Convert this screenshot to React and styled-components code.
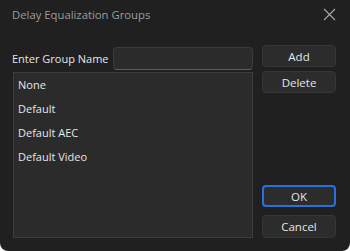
import React from "react";
import styled, { createGlobalStyle } from "styled-components";

const GlobalStyle = createGlobalStyle`
  html, body {
    margin: 0;
    padding: 0;
    background: #ffffff;
  }
  * {
    box-sizing: border-box;
  }
`;

const Dialog = styled.div`
  width: 350px;
  height: 251px;
  background: #202020;
  border-radius: 0 0 8px 8px;
  font-family: "Open Sans", "Noto Sans", sans-serif;
  font-size: 11px;
  color: #e6e6e6;
  display: flex;
  flex-direction: column;
  overflow: hidden;
`;

const TitleBar = styled.div`
  height: 30px;
  display: flex;
  align-items: center;
  justify-content: space-between;
  padding: 0 14px 2px 12px;
`;

const Title = styled.div`
  color: #9c9c9c;
  font-size: 11.3px;
`;

const Close = styled.button`
  width: 14px;
  height: 14px;
  padding: 0;
  border: none;
  background: none;
  display: flex;
  align-items: center;
  justify-content: center;
`;

const Body = styled.div`
  flex: 1;
  display: flex;
  gap: 9px;
  padding: 15px 14px 13px 12px;
`;

const Left = styled.div`
  width: 241px;
  display: flex;
  flex-direction: column;
  gap: 2px;
`;

const NameRow = styled.div`
  display: flex;
  align-items: center;
  height: 25px;
  padding-top: 1px;
`;

const Label = styled.label`
  width: 101px;
  flex: none;
  white-space: nowrap;
`;

const Input = styled.input`
  flex: 1;
  min-width: 0;
  width: 0;
  height: 23px;
  background: #2b2b2b;
  border: 1px solid #3a3a3a;
  border-bottom-color: #5a5a5a;
  border-radius: 4px;
  color: #e6e6e6;
  font: inherit;
  outline: none;
  padding: 0 6px;
`;

const List = styled.ul`
  list-style: none;
  margin: 0 0 0 1px;
  padding: 0;
  flex: 1;
  background: #2b2b2b;
  border: 1px solid #3d3d3d;
`;

const Item = styled.li`
  height: 24px;
  line-height: 24px;
  padding-left: 4px;
`;

const Right = styled.div`
  width: 74px;
  display: flex;
  flex-direction: column;
  gap: 4px;
`;

const Spacer = styled.div`
  flex: 1;
`;

const Button = styled.button`
  height: ${({ $tall }) => ($tall ? "23px" : "22px")};
  width: 74px;
  background: #2c2c2c;
  border: ${({ $primary }) => ($primary ? "2px solid #2a6fe0" : "1px solid #363636")};
  border-radius: 4px;
  color: #e6e6e6;
  font: inherit;
  font-size: 11.5px;
  padding: 0;
  margin-top: ${({ $gap }) => ($gap ? `${$gap}px` : "0")};
`;

const items = ["None", "Default", "Default AEC", "Default Video"];

export default function App() {
  return (
    <>
      <GlobalStyle />
      <Dialog>
        <TitleBar>
          <Title>Delay Equalization Groups</Title>
          <Close aria-label="Close">
            <svg width="13" height="13" viewBox="0 0 13 13">
              <path d="M1 1 L12 12 M12 1 L1 12" stroke="#a8a8a8" strokeWidth="1.1" />
            </svg>
          </Close>
        </TitleBar>
        <Body>
          <Left>
            <NameRow>
              <Label>Enter Group Name</Label>
              <Input />
            </NameRow>
            <List>
              {items.map((it) => (
                <Item key={it}>{it}</Item>
              ))}
            </List>
          </Left>
          <Right>
            <Button>Add</Button>
            <Button>Delete</Button>
            <Spacer />
            <Button $primary>OK</Button>
            <Button $gap={4} $tall>Cancel</Button>
          </Right>
        </Body>
      </Dialog>
    </>
  );
}
